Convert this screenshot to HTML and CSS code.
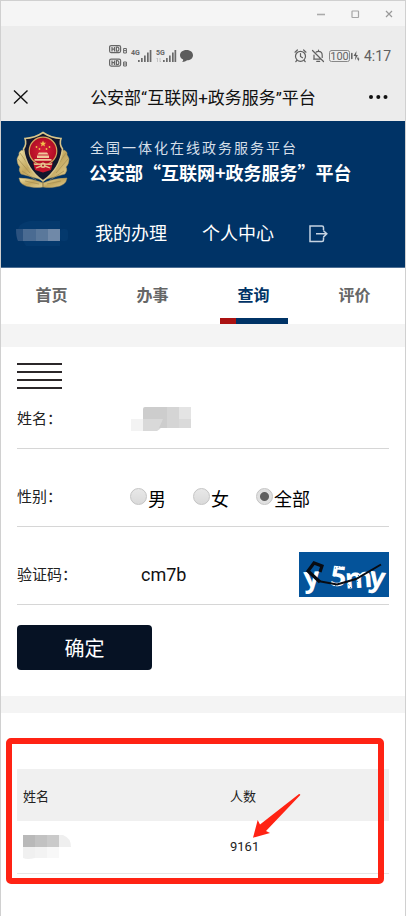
FILE: index.html
```html
<!DOCTYPE html>
<html lang="zh-CN">
<head>
<meta charset="utf-8">
<meta name="viewport" content="width=device-width, initial-scale=1">
<title>公安部“互联网+政务服务”平台</title>
<link rel="stylesheet" href="styles.css">
</head>
<body>
<div class="window">
  <div class="titlebar">
    <button class="win-btn" aria-label="最小化"><svg width="10" height="10" viewBox="0 0 10 10"><path d="M1 5.5h8" stroke="#aaa" stroke-width="1.6"/></svg></button>
    <button class="win-btn" aria-label="最大化"><svg width="10" height="10" viewBox="0 0 10 10"><rect x="2" y="2" width="6.5" height="6.5" rx=".5" fill="none" stroke="#a6a6a6" stroke-width="1.2"/></svg></button>
    <button class="win-btn" aria-label="关闭"><svg width="10" height="10" viewBox="0 0 10 10"><path d="M2 2l6 6M8 2L2 8" stroke="#999" stroke-width="1.2"/></svg></button>
  </div>

  <div class="status">
    <svg class="status-left" width="86" height="24" viewBox="0 0 86 24">
      <g fill="none" stroke="#666" stroke-width="1.2">
        <rect x=".6" y="1.6" width="11" height="7" rx="1.5"/>
        <rect x=".6" y="15.1" width="11" height="7" rx="1.5"/>
        <path d="M3 3v4.500M5.500 3v4.500M3 5.200h2.500M7.400 3.200v4h.9q1.600 0 1.600-2t-1.600-2zM3 16.500v4.500M5.500 16.500v4.500M3 18.700h2.500M7.400 16.700v4h.9q1.600 0 1.600-2t-1.600-2z"/>
        <path d="M14.600 4.500h2.800v4.500h-2.800zM15 6.600h2M14.600 22v-4h2.800v4zM14.600 20h2.800" stroke-width="1"/>
      </g>
      <text class="net" x="22" y="11">4G</text>
      <text class="net" x="47" y="11">5G</text>
      <path d="M48.500 14v4M47.500 15l1-1M51 14v4M52 17l-1 1" stroke="#bbb" stroke-width=".8" fill="none"/>
      <g fill="#6a6a6a">
        <path d="M29 16h1.700v2H29zM32 14h1.700v4H32zM35 11.500h1.700V18H35zM38 8.500h1.700V18H38zM40.700 6h1.700v12h-1.700z"/>
        <path d="M54 16h1.700v2H54zM57 14h1.700v4H57zM60 11.500h1.700V18H60zM63 8.500h1.700V18H63zM65.500 6h1.700v12h-1.700z"/>
      </g>
      <path d="M77.500 6c4 0 6.500 2.300 6.500 5.200s-2.700 5.100-6 5.100c-1.500 1.300-3 1.800-5 1.700 1-.8 1.300-1.700 1.100-2.500-2-1-3.100-2.500-3.100-4.300C71 8.300 73.500 6 77.500 6z" fill="#5c5c5c"/>
    </svg>
    <svg class="status-right" width="66" height="14" viewBox="0 0 66 14">
      <g fill="none" stroke="#606060" stroke-width="1.200" stroke-linecap="round">
        <circle cx="6.500" cy="7.300" r="5"/>
        <path d="M6.500 4.500v3l2 1.200M1 3.200L3.400 1M12 3.200L9.600 1M2.800 11.500l-1 1.200M10.200 11.500l1 1.200"/>
        <path d="M19.700 10.200h6.800M20 9.500V6M28.200 8.500V6.200c0-2.400-1.600-3.900-3.700-3.900-.9 0-1.700.2-2.300.7M24.500 1v1.200M18.500 1.500l11 11M22.700 12.300h3"/>
        <rect x="35.500" y="1.500" width="20" height="11" rx="2" stroke-width="1" stroke="#888"/>
        <path d="M57.800 4.500v5" stroke-width="1.500"/>
      </g>
      <text class="battery" x="45.500" y="11" text-anchor="middle">100</text>
      <path d="M62.500 2l-3 5h2l-.6 4.500 3-5.500h-1.800zM64 7.500l.7 2 .8.200-1.500 2.800v-2l-1-.3z" fill="#606060"/>
    </svg>
    <span class="clock">4:17</span>
  </div>

  <div class="navbar">
    <button class="nav-btn" aria-label="关闭页面"><svg width="16" height="16" viewBox="0 0 16 16"><path d="M1 1.500l13.500 13M14.500 1.500L1 14.500" stroke="#111" stroke-width="1.400"/></svg></button>
    <h1 class="nav-title">公安部“互联网+政务服务”平台</h1>
    <button class="nav-btn" aria-label="更多"><svg width="20" height="16" viewBox="0 0 20 16"><g fill="#111"><circle cx="3" cy="8" r="2"/><circle cx="10.300" cy="8" r="2"/><circle cx="17.500" cy="8" r="2"/></g></svg></button>
  </div>

  <header class="header">
    <div class="brand">
      <svg class="emblem" width="54" height="58" viewBox="0 0 54 58">
        <defs>
          <linearGradient id="gold" x1="0" y1="0" x2="1" y2="1"><stop offset="0" stop-color="#f0e2a8"/><stop offset=".5" stop-color="#c3a75e"/><stop offset="1" stop-color="#e4d39a"/></linearGradient>
          <radialGradient id="red"><stop offset="0" stop-color="#d8203a"/><stop offset="1" stop-color="#b00c24"/></radialGradient>
        </defs>
        <g fill="url(#gold)" stroke="#a8935a" stroke-width=".5">
          <path d="M27 49L5 43q-3-4-1-7-3-3-3-8 1-3 2-4-1-3 3-5l9 5z"/>
          <path d="M27 49l22-6q3-4 1-7 3-3 3-8-1-3-2-4 1-3-3-5l-9 5z"/>
          <path d="M27 52Q15 47 3 47q1 8 12 9 6 1 12 0z"/>
          <path d="M27 52q12-5 24-5-1 8-12 9-6 1-12 0z"/>
        </g>
        <path d="M2 28l12 14M4 22l12 17M52 28L40 42M50 22L38 39M6 40l14 9M48 40l-14 9M9 50l14 3M45 50l-14 3" stroke="#a48c52" stroke-width=".7"/>
        <path d="M27 1.500Q19 7 9 7.500 11 13 7.500 18 10 38 27 50 44 38 46.500 18 43 13 45 7.500 35 7 27 1.500z" fill="#12162c" stroke="#d8c58a" stroke-width="1.600"/>
        <circle cx="27" cy="20" r="13.800" fill="url(#red)" stroke="#d9a75d" stroke-width="1.200"/>
        <path d="M27 9.500l.9 2.200 2.300.1-1.800 1.500.6 2.300-2-1.300-2 1.300.6-2.300-1.800-1.500 2.300-.1z" fill="#f3c24b"/>
        <g fill="#f0bd48"><circle cx="20.500" cy="16" r=".9"/><circle cx="33.500" cy="16" r=".9"/><circle cx="23.500" cy="18" r=".9"/><circle cx="30.500" cy="18" r=".9"/></g>
        <path d="M23 21.500h8l1.500 2h-11zM21 24.500h12v2.500H21zM18.500 28h17v1.800h-17z" fill="#f0c79a"/>
        <path d="M17 31l5 3h10l5-3-2 8-8 2.500-8-2.500z" fill="#c5152c"/>
        <path d="M18 33q5 1 9-1 4 2 9 1M20 37q4-2 7-2t7 2" stroke="#e8c490" stroke-width="1.300" fill="none"/>
        <circle cx="27" cy="34.500" r="2.500" fill="#e8c490"/><circle cx="27" cy="34.500" r="1" fill="#a91a25"/>
        <path d="M27 50v6" stroke="#9d8850"/>
      </svg>
      <div class="brand-text">
        <p class="brand-sub">全国一体化在线政务服务平台</p>
        <p class="brand-name">公安部“互联网+政务服务”平台</p>
      </div>
    </div>
    <nav class="user-nav" aria-label="用户">
      <svg class="mask-user" width="44" height="26" viewBox="0 0 44 26">
        <path d="M4 4q8-5 16-4h24v8H2zM7 20h37v5H10z" fill="#04396d"/>
        <rect x="44" y="8" width="8" height="12" rx="3" fill="#04396d"/>
        <path d="M0 8h7v12H2q-2-4-2-12z" fill="#2b527f"/>
        <path d="M7 8h13v12H7z" fill="#4a6b92"/>
        <path d="M20 8h12v12H20z" fill="#5a789b"/>
        <path d="M32 8h12v12H32z" fill="#7089a8"/>
      </svg>
      <a href="#affairs">我的办理</a>
      <a href="#center">个人中心</a>
      <a href="#logout" aria-label="退出"><svg width="19" height="18" viewBox="0 0 19 18"><path d="M14.500 5V2.500q0-1.500-1.500-1.500H1v15.500h12q1.500 0 1.500-1.500v-2.500M7 8.800h10.500M14.300 5.500l3.500 3.300-3.500 3.300" fill="none" stroke="#c5d3e2" stroke-width="1.500"/></svg></a>
    </nav>
  </header>

  <nav class="tabs" aria-label="主导航">
    <a class="tab" href="#home">首页</a>
    <a class="tab" href="#work">办事</a>
    <a class="tab active" href="#query" aria-current="page">查询</a>
    <a class="tab" href="#rate">评价</a>
  </nav>

  <main>
    <form class="query" id="query">
      <button type="button" class="menu" aria-label="菜单"><span></span><span></span><span></span><span></span></button>
      <div class="row">
        <span class="label">姓名：</span>
        <svg class="mask-name" width="60" height="24" viewBox="0 0 60 24">
          <path d="M0 12h12v12H0z" fill="#f3f3f3"/>
          <path d="M12 12h20v4q-1 5-6 8H12z" fill="#d9d9d9"/>
          <path d="M12 2q0-2 2-2h22v21h-8l4-9H12z" fill="#cdcdcd"/>
          <path d="M36 0h12v21H36z" fill="#d5d5d5"/>
          <path d="M48 0h12v12H48z" fill="#e4e4e4"/>
          <path d="M48 12h12v9H48z" fill="#dadada"/>
        </svg>
      </div>
      <div class="row" role="radiogroup" aria-label="性别">
        <span class="label">性别：</span>
        <div class="radios">
          <label><input type="radio" name="sex"><span>男</span></label>
          <label><input type="radio" name="sex"><span>女</span></label>
          <label><input type="radio" name="sex" checked><span>全部</span></label>
        </div>
      </div>
      <div class="row">
        <label class="label" for="code">验证码：</label>
        <input class="code" id="code" type="text" value="cm7b">
        <svg class="captcha" width="90" height="45" viewBox="0 0 90 45" role="img" aria-label="验证码图片">
          <rect width="90" height="45" fill="#04539a"/>
          <g class="captcha-text">
            <text x="5" y="35" transform="rotate(-4 12 30)">y</text>
            <text x="31" y="34" transform="rotate(6 38 28)">5</text>
            <text x="46" y="36" transform="rotate(-4 58 30)">m</text>
            <text x="70" y="35" transform="rotate(8 76 30)">y</text>
          </g>
          <path d="M33 17l14-4M36 34l7-3M48 30l5 8M60 20l-2 12" stroke="#04539a" stroke-width="1" stroke-dasharray="1 2"/>
          <path d="M21 20l2-6-8-3-6 8 12 11" fill="none" stroke="#080b12" stroke-width="3.200"/>
          <path d="M19 29l19 3.500L57 27l25-14.500" fill="none" stroke="#080b12" stroke-width="2"/>
        </svg>
      </div>
      <button type="submit" class="submit">确定</button>
    </form>

    <section class="results">
      <table>
        <thead><tr><th scope="col">姓名</th><th scope="col">人数</th></tr></thead>
        <tbody><tr>
          <td><svg class="mask-cell" width="48" height="24" viewBox="0 0 48 24">
            <path d="M0 0h12v12H0z" fill="#b9b9b9"/><path d="M12 0h12v12H12z" fill="#c2c2c2"/><path d="M24 0h12v12H24z" fill="#cacaca"/><path d="M36 0h4q8 3 8 12H36z" fill="#efefef"/>
            <path d="M0 12h12v11q-8 2-12 0z" fill="#f0f0f0"/><path d="M12 12h12v11H12z" fill="#f3f3f3"/><path d="M24 12h12v11H24z" fill="#f8f8f8"/>
          </svg></td>
          <td>9161</td>
        </tr></tbody>
      </table>
      <div class="highlight"></div>
      <svg class="arrow" width="48" height="44" viewBox="0 0 48 44"><path d="M47 .3L46 0 7 30.500 4.700 26 0 43.700l17-4.700-4-2L47.300 1z" fill="#ff2314"/></svg>
    </section>
  </main>
</div>
</body>
</html>
```
FILE: styles.css
```css
* { box-sizing: border-box; }

body {
  margin: 0;
  background: #fff;
  color: #222;
  font-family: Roboto, "Noto Sans CJK SC", sans-serif;
  font-size: 16px;
}

a { color: inherit; text-decoration: none; }

button {
  padding: 0;
  border: 0;
  background: none;
  font-family: inherit;
}

svg { display: block; flex: none; }

.window {
  min-height: 100vh;
  border: 1px solid #d0d0d0;
  border-bottom: 0;
}

/* Desktop window bar */
.titlebar {
  display: flex;
  justify-content: flex-end;
  align-items: center;
  gap: 24px;
  height: 25px;
  padding-right: 11px;
  background: #f5f5f5;
}

/* Phone status bar */
.status {
  display: flex;
  align-items: center;
  height: 48px;
  padding: 12px 14px 0 108px;
  background: #ececec;
}

.status-right { margin-left: auto; }

.net { font-size: 7px; font-weight: 700; fill: #666; }

.battery { font-size: 11px; fill: #666; }

.clock {
  margin-left: 4px;
  color: #606060;
  font-size: 14px;
}

.navbar {
  display: grid;
  grid-template-columns: 1fr auto 1fr;
  align-items: center;
  height: 47px;
  padding: 0 17px 2px 12px;
  background: #ececec;
}

.nav-btn:first-child { justify-self: start; }

.nav-btn:last-child { justify-self: end; }

.nav-title {
  margin: 0;
  padding-left: 5px;
  color: #111;
  font-size: 17px;
  font-weight: 400;
}

/* Site header */
.header {
  height: 147px;
  padding: 10px 15px 0;
  border-bottom: 1px solid #4d6f94;
  background: #003366;
  color: #fff;
}

.brand {
  display: flex;
  align-items: center;
  gap: 19px;
}

.brand-text {
  font-family: "Noto Sans CJK SC", sans-serif;
  line-height: 25px;
  white-space: nowrap;
}

.brand-text p { margin: 0; }

.brand-sub {
  padding-left: 1px;
  color: #d5dfe9;
  font-size: 14px;
  letter-spacing: 2px;
}

.brand-name { font-size: 18px; font-weight: 700; }

.user-nav {
  display: flex;
  align-items: center;
  gap: 35px;
  margin-top: 31px;
  font-size: 18px;
  line-height: 28px;
}

.mask-user { overflow: visible; }

/* Tabs */
.tabs {
  display: grid;
  grid-template-columns: repeat(4, 1fr);
  border-bottom: 23px solid #f4f4f4;
}

.tab {
  display: flex;
  flex-direction: column;
  align-items: center;
  padding-top: 13px;
  color: #666;
  font-weight: 700;
  line-height: 30px;
}

.tab::after {
  content: "";
  width: 68px;
  height: 6px;
  margin-top: 7px;
}

.active { color: #003366; }

.active::after { background: linear-gradient(90deg, #ab1212 16px, #003366 16px); }

/* Query form */
.query {
  padding: 16px 16px 26px;
  border-bottom: 17px solid #f4f4f4;
}

.menu {
  display: grid;
  gap: 6px;
  width: 45px;
}

.menu span { height: 2px; background: #2b2729; }

.row {
  display: flex;
  align-items: center;
  height: 78px;
  padding-top: 18px;
  border-bottom: 1px solid #d6d6d6;
}

.menu + .row { height: 60px; padding-top: 0; }

.label {
  flex: none;
  width: 113px;
  padding-bottom: 2px;
  font-size: 15px;
}

.mask-name { margin-left: 1px; }

.radios {
  display: flex;
  gap: 27px;
  color: #000;
  font-size: 18px;
}

.radios label { display: flex; align-items: center; }

.radios span { padding-top: 6px; line-height: 24px; }

.radios input {
  appearance: none;
  width: 17px;
  height: 17px;
  margin: 0 1px 0 0;
  border: 1px solid #c4c4c4;
  border-radius: 50%;
  background: linear-gradient(#e8e8e8, #dadada);
}

.radios input:checked { background: radial-gradient(circle, #606060 4px, #e0e0e0 5px); }

.code {
  flex: 1;
  min-width: 0;
  margin-left: 11px;
  padding: 0;
  border: 0;
  outline: 0;
  background: none;
  color: #111;
  font: inherit;
  font-size: 18px;
}

.captcha-text {
  fill: #fff;
  font-family: "Open Sans", sans-serif;
  font-size: 28px;
  font-weight: 700;
}

.submit {
  display: block;
  width: 135px;
  height: 45px;
  margin-top: 20px;
  border-radius: 4px;
  background: #061224;
  color: #fff;
  font-size: 20px;
}

/* Results */
.results {
  position: relative;
  padding: 56px 16px 42px;
}

table {
  width: 100%;
  border-collapse: collapse;
  table-layout: fixed;
  font-size: 13px;
}

th, td {
  height: 52px;
  padding: 0 6px;
  font-weight: 400;
  text-align: left;
}

th:first-child { width: 207px; }

thead { background: #f0f0f0; }

tbody tr { border-bottom: 1px solid #e6e6e6; }

.highlight {
  position: absolute;
  top: 25px;
  right: 21px;
  left: 5px;
  height: 146px;
  border: 6px solid #ff2314;
  border-radius: 5px;
}

.arrow {
  position: absolute;
  top: 81px;
  left: 252px;
}
```
